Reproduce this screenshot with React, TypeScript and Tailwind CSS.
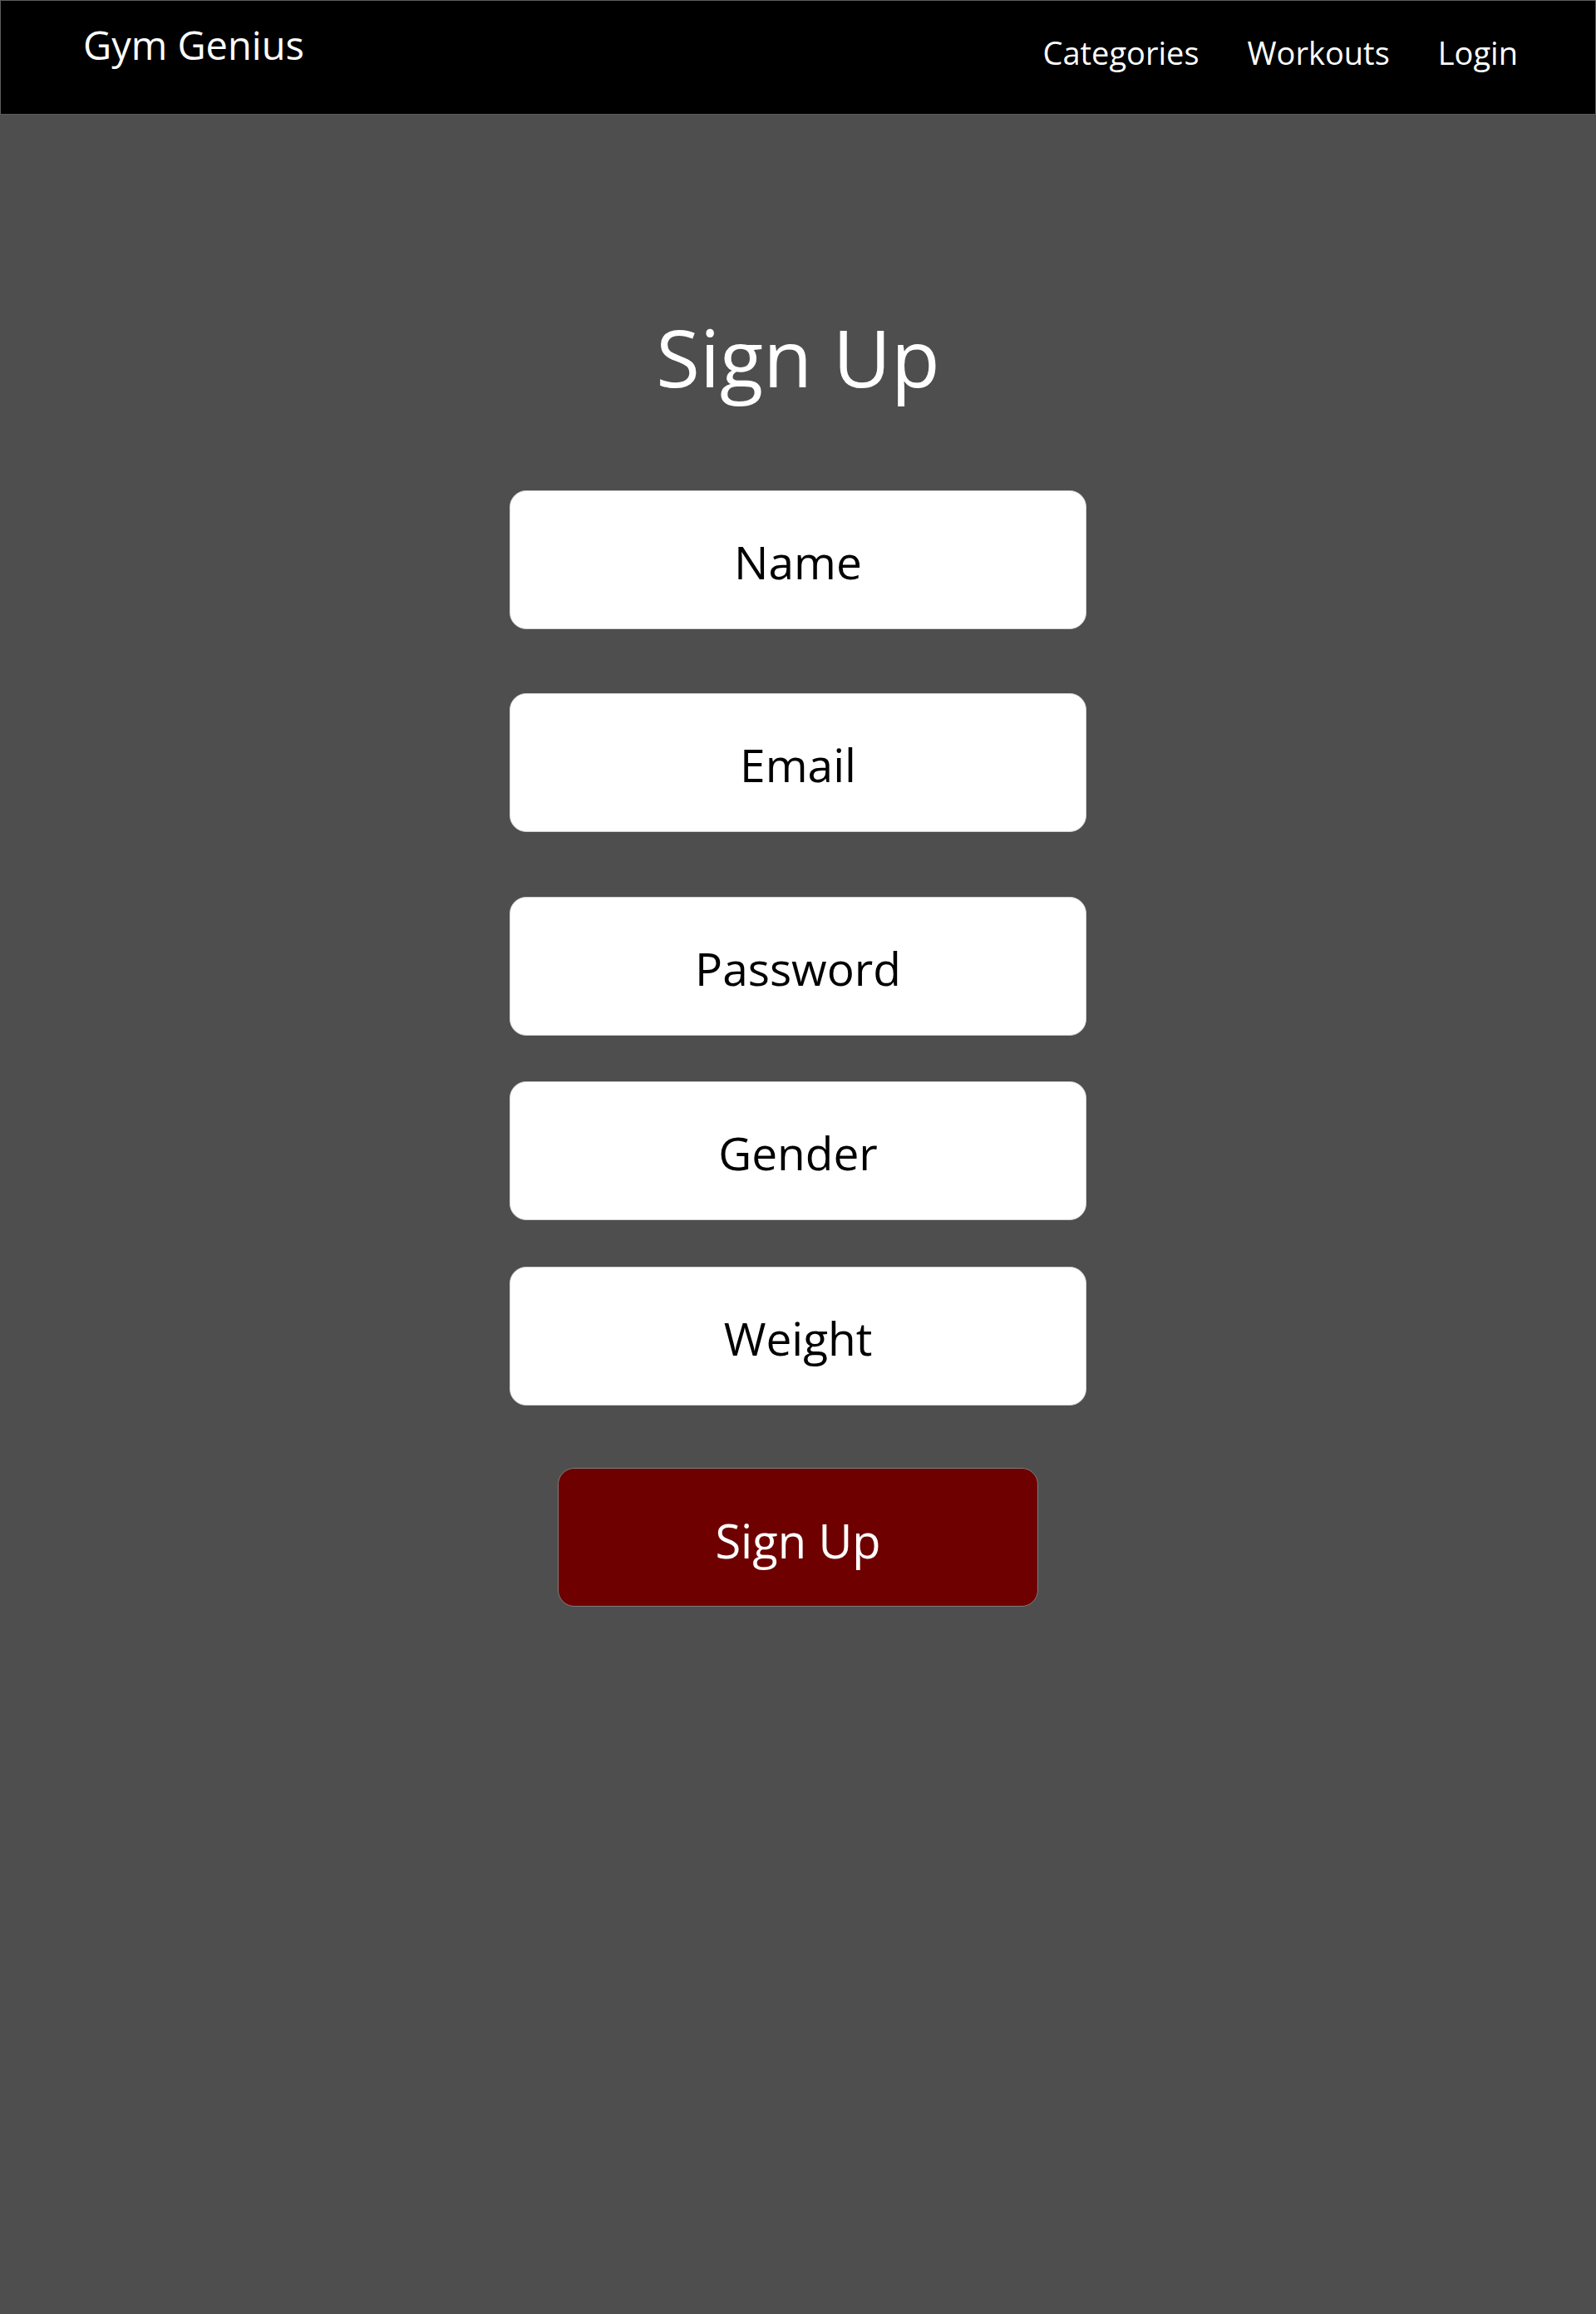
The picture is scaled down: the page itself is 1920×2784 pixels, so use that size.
import React from "react";

const fields = [
  { label: "Name", gap: "mt-0" },
  { label: "Email", gap: "mt-[77px]" },
  { label: "Password", gap: "mt-[78px]" },
  { label: "Gender", gap: "mt-[55px]" },
  { label: "Weight", gap: "mt-[56px]" },
];

const Navbar = () => {
  const links = ["Categories", "Workouts", "Login"];
  return <header className="flex items-start h-[138px] bg-black border border-[#5c5c5c] pl-[99px] pr-[93px]">
      <a className="pt-[30px] text-[47px] leading-none text-white">Gym Genius</a>
      <nav className="ml-auto flex gap-[58px] pt-[43px]">
        {links.map(link => <a key={link} className="text-[38px] leading-none text-white">
            {link}
          </a>)}
      </nav>
    </header>;
};

export default function App() {
  return <div className="min-h-[2784px] bg-[#4e4e4e] font-['Open_Sans',sans-serif]">
      <Navbar />

      <main className="flex flex-col items-center">
        <h1 className="mt-[243px] text-[96px] leading-none text-white">Sign Up</h1>

        <form className="mt-[113px] flex flex-col items-center">
          {fields.map(field => <div key={field.label} className={`${field.gap} w-[694px] h-[167px] pt-[6px] flex items-center justify-center bg-white rounded-[20px] border border-[#d4d4d4] text-[55px] text-black`}>
              {field.label}
            </div>)}

          <button type="button" className="mt-[75px] w-[578px] h-[167px] pt-[6px] flex items-center justify-center bg-[#6e0000] rounded-[20px] border border-[#7c7c7c] text-[56px] text-white">
            Sign Up
          </button>
        </form>
      </main>
    </div>;
}
